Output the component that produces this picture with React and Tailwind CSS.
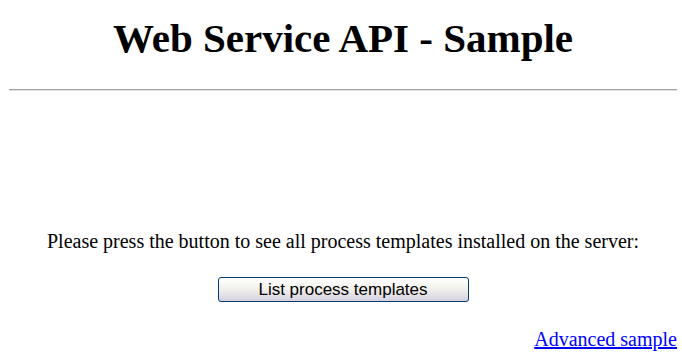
import React from "react";

export default function App() {
  return (
    <div className="w-[682px] h-[352px] overflow-hidden bg-white pl-[9px] pr-[5px] text-black font-['Liberation_Serif',serif]">
      <h1 className="pt-[14px] text-center text-[41px] font-bold leading-[48px]">Web Service API - Sample</h1>
      <div className="mt-[27px] h-[2px] border-t border-[#a0a0a0] border-b border-b-[#e3e3e3]" />
      <p className="mt-[139px] text-center text-[20px] leading-[23px]">
        Please press the button to see all process templates installed on the server:
      </p>
      <div className="mt-[24px] flex justify-center">
        <button className="w-[251px] h-[25px] rounded-[3px] border border-[#003c74] bg-gradient-to-b from-[#ffffff] via-[#f0f0ea] to-[#d6d0e2] text-[17px] leading-none text-black font-['Liberation_Sans',sans-serif]">
          List process templates
        </button>
      </div>
      <div className="mt-[26px] flex justify-end">
        <a href="#" className="text-[20px] leading-[23px] text-[#0000ff] underline">Advanced sample</a>
      </div>
    </div>
  );
}
